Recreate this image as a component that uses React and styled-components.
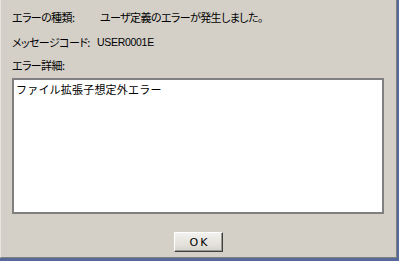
import React from "react";
import styled, { createGlobalStyle } from "styled-components";

const Global = createGlobalStyle`
  html, body { margin: 0; padding: 0; background: #d4d0c8; }
  body { font-family: "Noto Sans CJK JP", "Liberation Sans", sans-serif; }
`;

const Frame = styled.div`
  width: 399px;
  height: 261px;
  box-sizing: border-box;
  background: #56699a;
  padding: 0 2px 3px 0;
  display: flex;
`;

const Dialog = styled.div`
  flex: 1;
  box-sizing: border-box;
  background: #d4d0c8;
  border-left: 1px solid #e6e4df;
  border-right: 1px solid #808080;
  border-bottom: 1px solid #808080;
  padding: 10px 12px 4px 11px;
  display: flex;
  flex-direction: column;
  font-size: 11px;
  line-height: 14px;
  color: #000;
`;

const InfoRow = styled.div`
  display: grid;
  grid-template-columns: ${(p) => p.$labelWidth}px 1fr;
  margin-bottom: ${(p) => p.$gap}px;
  white-space: nowrap;
  font-feature-settings: "palt";
  letter-spacing: -0.6px;
`;

const Label = styled.span``;

const Code = styled.span`
  font-family: "Liberation Sans", sans-serif;
  font-size: 10.5px;
  letter-spacing: -0.3px;
`;

const DetailBox = styled.div`
  height: 136px;
  box-sizing: border-box;
  background: #fff;
  border: 2px solid #808080;
  padding: 2px 2px;
  letter-spacing: 0.2px;
`;

const Footer = styled.div`
  flex: 1;
  display: flex;
  justify-content: center;
  align-items: flex-start;
  padding-top: 18px;
`;

const Button = styled.button`
  width: 49px;
  height: 20px;
  box-sizing: border-box;
  margin-left: 1px;
  padding: 0;
  border: 1px solid;
  border-color: #ffffff #404040 #404040 #ffffff;
  box-shadow: inset -1px -1px 0 #9a9893;
  background: linear-gradient(to bottom, #f2f1ee 0%, #e4e2dc 60%, #d6d3cb 100%);
  font-family: "DejaVu Sans", sans-serif;
  font-size: 11px;
  letter-spacing: 2px;
  text-indent: 2px;
  color: #000;
`;

export default function App() {
  return (
    <>
      <Global />
      <Frame>
        <Dialog>
          <InfoRow $labelWidth={88} $gap={11}>
            <Label>エラーの種類:</Label>
            <Label>ユーザ定義のエラーが発生しました。</Label>
          </InfoRow>
          <InfoRow $labelWidth={85} $gap={9}>
            <Label>メッセージコード:</Label>
            <Code>USER0001E</Code>
          </InfoRow>
          <InfoRow $labelWidth={85} $gap={6}>
            <Label>エラー詳細:</Label>
          </InfoRow>
          <DetailBox>ファイル拡張子想定外エラー</DetailBox>
          <Footer>
            <Button>OK</Button>
          </Footer>
        </Dialog>
      </Frame>
    </>
  );
}
